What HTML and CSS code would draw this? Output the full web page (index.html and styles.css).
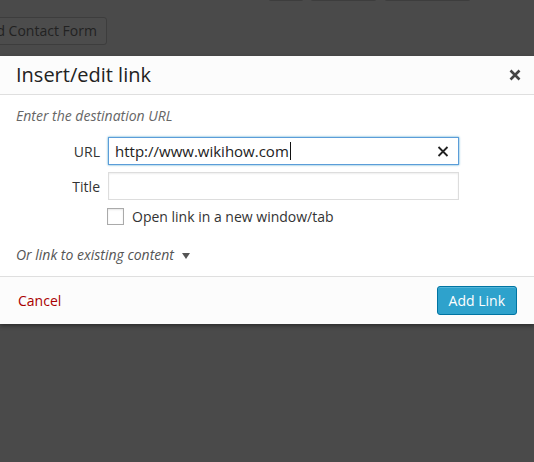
FILE: index.html
```html
<!DOCTYPE html>
<html>
<head>
<meta charset="utf-8">
<link rel="stylesheet" href="styles.css">
</head>
<body>
<div class="backdrop">
  <div class="toolbar">
    <span class="tb tb1"></span>
    <span class="tb tb2"></span>
    <span class="tb tb3"></span>
  </div>
  <div class="formbar">
    <span class="bgbtn">Add Contact Form</span>
  </div>
</div>
<div class="dialog">
  <div class="dlg-head">
    <h1 class="dlg-title">Insert/edit link</h1>
    <svg class="close" width="12" height="12" viewBox="0 0 12 12"><path d="M1.5 1.5 L10.5 10.5 M10.5 1.5 L1.5 10.5" stroke="#444" stroke-width="2.6" stroke-linecap="butt"/></svg>
  </div>
  <div class="dlg-body">
    <p class="hint">Enter the destination URL</p>
    <div class="row">
      <span class="lbl">URL</span>
      <div class="field focus">
        <span class="val">http://www.wikihow.com</span><span class="caret"></span>
        <svg class="clear" width="12" height="11" viewBox="0 0 12 11"><path d="M1.5 1 L10.5 10 M10.5 1 L1.5 10" stroke="#222" stroke-width="1.8"/></svg>
      </div>
    </div>
    <div class="row">
      <span class="lbl">Title</span>
      <div class="field"></div>
    </div>
    <div class="row check">
      <span class="box"></span>
      <span class="chk-text">Open link in a new window/tab</span>
    </div>
    <p class="existing">Or link to existing content <span class="arrow"></span></p>
  </div>
  <div class="dlg-foot">
    <span class="cancel">Cancel</span>
    <span class="primary">Add Link</span>
  </div>
</div>
</body>
</html>
```

FILE: styles.css
```css
html, body {
  margin: 0;
  padding: 0;
}
body {
  background: #4a4a4a;
  font-family: "Open Sans", "Liberation Sans", sans-serif;
  width: 534px;
  height: 462px;
  overflow: hidden;
}
.backdrop {
  height: 56px;
  overflow: hidden;
}
.toolbar {
  display: flex;
  margin-top: -26px;
  padding-left: 268px;
  gap: 6px;
  height: 28px;
}
.tb {
  display: block;
  height: 27px;
  border: 1px solid #3d3d3d;
  border-radius: 3px;
  background: #4c4c4c;
  box-sizing: border-box;
}
.tb1 { width: 36px; }
.tb2 { width: 67px; margin-left: 0; }
.tb3 { width: 87px; margin-left: 1px; }
.formbar {
  padding-top: 15px;
  margin-left: -32px;
}
.bgbtn {
  display: inline-block;
  height: 28px;
  line-height: 26px;
  box-sizing: border-box;
  padding: 0 9px 0 10px;
  border: 1px solid #3d3d3d;
  border-radius: 3px;
  background: #4c4c4c;
  color: #222;
  font-size: 14px;
}
.dialog {
  background: #fff;
  height: 268px;
  display: flex;
  flex-direction: column;
  box-shadow: 0 2px 4px rgba(0,0,0,0.4);
}
.dlg-head {
  height: 38px;
  background: #fcfcfc;
  border-bottom: 1px solid #dfdfdf;
  display: flex;
  align-items: center;
  justify-content: space-between;
  padding: 0 13px 0 16px;
}
.dlg-title {
  margin: 0;
  font-size: 20px;
  font-weight: 400;
  color: #222;
  line-height: 26px;
}
.close { display: block; margin-top: 0; }
.dlg-body {
  flex: 1;
  padding: 12px 16px 0 16px;
}
.hint {
  margin: 0 0 12px 0;
  font-size: 14px;
  font-style: italic;
  color: #666;
  line-height: 18px;
}
.row {
  display: flex;
  align-items: center;
  margin-bottom: 7px;
}
.lbl {
  width: 84px;
  text-align: right;
  padding-right: 8px;
  font-size: 14px;
  color: #333;
}
.field {
  width: 351px;
  height: 28px;
  box-sizing: border-box;
  border: 1px solid #ddd;
  box-shadow: inset 0 1px 2px rgba(0,0,0,0.07);
  display: flex;
  align-items: center;
  padding: 0 8px 0 6px;
  background: #fff;
}
.field.focus {
  border-color: #5b9dd9;
  box-shadow: 0 0 2px rgba(30,140,190,0.8);
}
.val {
  font-size: 15px;
  color: #222;
}
.caret {
  display: inline-block;
  width: 1px;
  height: 18px;
  background: #111;
  margin-left: 1px;
}
.clear {
  margin-left: auto;
  margin-right: 1px;
}
.row.check {
  padding-left: 91px;
  margin-top: 1px;
  margin-bottom: 0;
}
.box {
  width: 17px;
  height: 17px;
  box-sizing: border-box;
  border: 1px solid #aaa;
  background: #fff;
  box-shadow: inset 0 1px 2px rgba(0,0,0,0.1);
}
.chk-text {
  margin-left: 8px;
  font-size: 14px;
  color: #333;
}
.existing {
  margin: 20px 0 0 0;
  font-size: 14px;
  font-style: italic;
  color: #555;
  line-height: 18px;
}
.arrow {
  display: inline-block;
  width: 0;
  height: 0;
  border-left: 4px solid transparent;
  border-right: 4px solid transparent;
  border-top: 6px solid #555;
  margin-left: 4px;
  vertical-align: 1px;
}
.dlg-foot {
  height: 47px;
  background: #fcfcfc;
  border-top: 1px solid #dfdfdf;
  display: flex;
  align-items: center;
  justify-content: space-between;
  padding: 0 17px 0 18px;
}
.cancel {
  font-size: 14px;
  color: #a00;
}
.primary {
  display: inline-block;
  height: 29px;
  line-height: 27px;
  box-sizing: border-box;
  padding: 0 11px;
  background: #2ea2cc;
  border: 1px solid #0074a2;
  border-radius: 3px;
  color: #fff;
  font-size: 14px;
  box-shadow: inset 0 1px 0 rgba(120,200,230,0.5);
}
```
